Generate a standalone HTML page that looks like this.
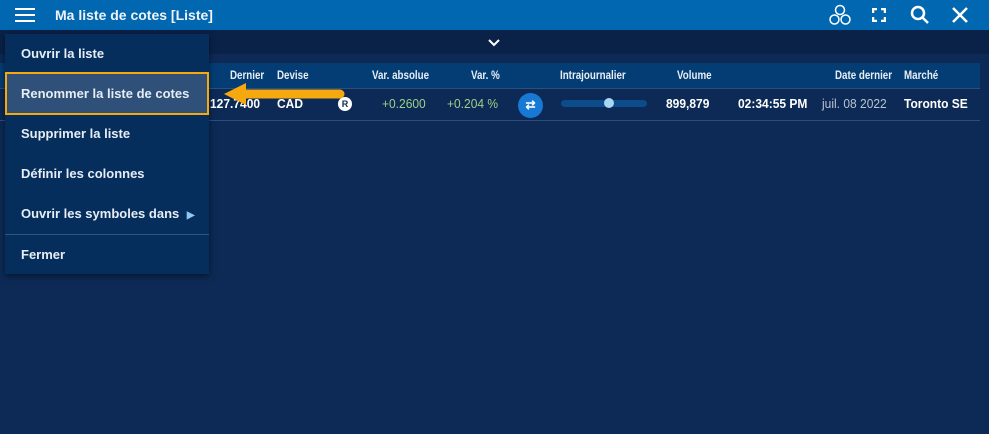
<!DOCTYPE html>
<html><head><style>
*{margin:0;padding:0;box-sizing:border-box}
body{width:989px;height:434px;background:#0c2a55;font-family:"Liberation Sans",sans-serif;color:#fff;position:relative;overflow:hidden;font-size:13px}
.top{position:absolute;left:0;top:0;width:989px;height:30px;background:#0067b0}
.title{position:absolute;left:55px;top:7px;font-size:14px;font-weight:bold;color:#f0f4f8}
.bar2{position:absolute;left:0;top:30px;width:989px;height:24px;background:#0a2148}
.thead{position:absolute;left:0;top:63px;width:980px;height:26px;background:#043c74;border-bottom:1px solid #2a5082}
.row{position:absolute;left:0;top:89px;width:980px;height:32px;border-bottom:1px solid #2a5082}
.h{position:absolute;top:70px;font-size:11.5px;font-weight:bold;color:#e8eef5;transform:scaleX(.85);transform-origin:left}
.c{position:absolute;top:97px;font-size:12.5px;font-weight:bold;transform:scaleX(.96);transform-origin:left}
.menu{position:absolute;left:5px;top:34px;width:204px;height:240px;background:#062e5c;box-shadow:0 2px 6px rgba(0,0,0,.5)}
.mi{position:absolute;left:16px;font-size:13px;font-weight:bold;color:#e6edf5}
</style></head><body>
<div class="top"></div>
<svg style="position:absolute;left:15px;top:8px" width="20" height="14"><rect y="0" width="20" height="2" fill="#fff"/><rect y="6" width="20" height="2" fill="#fff"/><rect y="12" width="20" height="2" fill="#fff"/></svg>
<div class="title">Ma liste de cotes [Liste]</div>
<svg style="position:absolute;left:828px;top:4px" width="24" height="22" fill="none" stroke="#fff" stroke-width="1.5"><circle cx="12" cy="6" r="4.5"/><circle cx="6.5" cy="15.5" r="4.5"/><circle cx="17.5" cy="15.5" r="4.5"/></svg>
<svg style="position:absolute;left:872px;top:8px" width="14" height="14" fill="none" stroke="#fff" stroke-width="2.5"><path d="M1 5V1H5M9 1H13V5M13 9V13H9M5 13H1V9"/></svg>
<svg style="position:absolute;left:910px;top:5px" width="20" height="20" fill="none" stroke="#fff" stroke-width="2.5"><circle cx="8" cy="8" r="6"/><path d="M12.5 12.5L18 18"/></svg>
<svg style="position:absolute;left:952px;top:7px" width="16" height="16" stroke="#fff" stroke-width="2.5"><path d="M1 1L15 15M15 1L1 15"/></svg>
<div class="bar2"></div>
<svg style="position:absolute;left:488px;top:39px" width="12" height="8" fill="none" stroke="#fff" stroke-width="2"><path d="M1 1L6 6L11 1"/></svg>
<div class="thead"></div><div class="row"></div>
<div class="h" style="left:230px">Dernier</div>
<div class="h" style="left:277px">Devise</div>
<div class="h" style="left:372px">Var. absolue</div>
<div class="h" style="left:471px">Var. %</div>
<div class="h" style="left:560px">Intrajournalier</div>
<div class="h" style="left:677px">Volume</div>
<div class="h" style="left:835px">Date dernier</div>
<div class="h" style="left:904px">Marché</div>
<div class="c" style="left:210px">127.7400</div>
<div class="c" style="left:277px">CAD</div>
<div style="position:absolute;left:338px;top:97px;width:14px;height:14px;border-radius:50%;background:#fff;color:#0c2a55;font-size:9px;font-weight:bold;text-align:center;line-height:14px">R</div>
<div class="c" style="left:382px;color:#9fd08a;font-weight:normal">+0.2600</div>
<div class="c" style="left:447px;color:#9fd08a;font-weight:normal">+0.204 %</div>
<div style="position:absolute;left:518px;top:93px;width:25px;height:25px;border-radius:50%;background:#1779d3;color:#fff;font-size:12px;text-align:center;line-height:25px;font-weight:bold">⇄</div>
<div style="position:absolute;left:561px;top:100px;width:86px;height:7px;border-radius:4px;background:#0c4c8a"></div>
<div style="position:absolute;left:604px;top:98px;width:10px;height:10px;border-radius:50%;background:#a9d6f5"></div>
<div class="c" style="left:666px">899,879</div>
<div class="c" style="left:738px">02:34:55 PM</div>
<div class="c" style="left:822px;font-weight:normal;color:#b8c4d2">juil. 08 2022</div>
<div class="c" style="left:904px">Toronto SE</div>
<div class="menu">
<div class="mi" style="top:12px">Ouvrir la liste</div>
<div style="position:absolute;left:0;top:38px;width:204px;height:43px;background:#2f5078;border:2px solid #f5a90f"></div>
<div class="mi" style="top:52px">Renommer la liste de cotes</div>
<div class="mi" style="top:92px">Supprimer la liste</div>
<div class="mi" style="top:132px">Définir les colonnes</div>
<div class="mi" style="top:172px">Ouvrir les symboles dans <span style="color:#8ec8f0;font-size:10px;margin-left:4px">▶</span></div>
<div style="position:absolute;left:0;top:200px;width:204px;height:1px;background:#2a5585"></div>
<div class="mi" style="top:213px">Fermer</div>
</div>
<svg style="position:absolute;left:222px;top:83px" width="128" height="22"><path d="M118 11H20" stroke="#f5a90f" stroke-width="9" stroke-linecap="round"/><path d="M2 11L24 0V22Z" fill="#f5a90f"/></svg>
</body></html>
